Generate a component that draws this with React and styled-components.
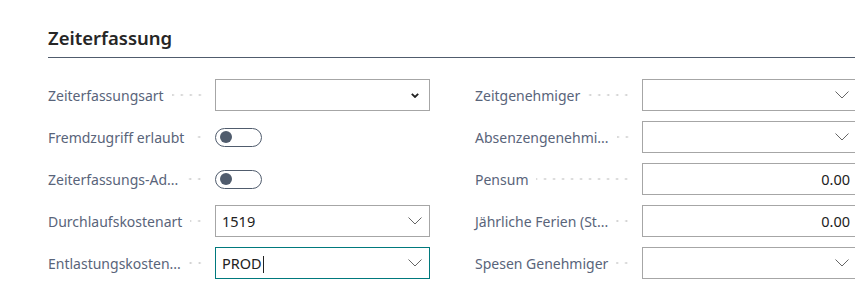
import React from "react";
import styled, { createGlobalStyle, css } from "styled-components";

const GlobalStyle = createGlobalStyle`
  body {
    margin: 0;
    background: #ffffff;
    overflow: hidden;
    font-family: "Noto Sans", "Open Sans", sans-serif;
  }
`;

const Page = styled.div`
  width: 855px;
  height: 297px;
  overflow: hidden;
  padding: 26px 0 0 48px;
  box-sizing: border-box;
`;

const Section = styled.section`
  width: 809px;
`;

const Title = styled.h2`
  margin: 0;
  font-size: 18.5px;
  font-weight: 600;
  line-height: 24px;
  color: #262626;
  padding-bottom: 7px;
  border-bottom: 1px solid #505c6d;
`;

const FieldGrid = styled.div`
  display: grid;
  grid-template-columns: 382px 382px;
  column-gap: 45px;
  margin-top: 16px;
`;

const Column = styled.div`
  display: flex;
  flex-direction: column;
`;

const Row = styled.div`
  display: grid;
  grid-template-columns: 167px 215px;
  height: 42px;
  align-items: center;
`;

const LabelCell = styled.div`
  display: flex;
  align-items: center;
  padding-right: 11px;
  min-width: 0;
`;

const LabelText = styled.span`
  font-size: 14px;
  color: #59647a;
  white-space: nowrap;
`;

const Leader = styled.span`
  flex: 1;
  height: 4px;
  margin-left: 8px;
  background-image: radial-gradient(circle, #cfcfcf 1px, transparent 1.2px);
  background-size: 9px 4px;
  background-repeat: repeat-x;
  background-position: right center;
`;

const Box = styled.div`
  position: relative;
  height: 32px;
  box-sizing: border-box;
  border: 1px solid #a6a6a6;
  display: flex;
  align-items: center;
  padding: 0 6px 0 6px;
  font-size: 14.5px;
  color: #212121;
  ${(p) =>
    p.$focused &&
    css`
      border: 1.5px solid #00797d;
    `}
  ${(p) =>
    p.$numeric &&
    css`
      justify-content: flex-end;
    `}
`;

const Value = styled.span`
  flex: 1;
  white-space: nowrap;
`;

const Caret = styled.span`
  display: inline-block;
  width: 1px;
  height: 17px;
  background: #212121;
  vertical-align: middle;
  margin-left: 1px;
`;

const Chevron = styled.svg`
  flex: none;
  margin-right: ${(p) => (p.$bold ? "4px" : "1px")};
`;

const Track = styled.div`
  width: 47px;
  height: 19px;
  box-sizing: border-box;
  border: 1px solid #505c6d;
  border-radius: 10px;
  display: flex;
  align-items: center;
  padding-left: 4px;
`;

const Knob = styled.span`
  width: 12px;
  height: 12px;
  border-radius: 50%;
  background: #505c6d;
`;

const ThinChevron = () => (
  <Chevron width="14" height="8" viewBox="0 0 14 8">
    <path d="M0.5 0.5 L7 7 L13.5 0.5" fill="none" stroke="#666" strokeWidth="1" />
  </Chevron>
);

const BoldChevron = () => (
  <Chevron $bold width="8" height="5" viewBox="0 0 8 5">
    <path d="M0.8 0.8 L4 4 L7.2 0.8" fill="none" stroke="#212121" strokeWidth="1.8" />
  </Chevron>
);

const Field = ({ label, type, value, focused }) => (
  <Row>
    <LabelCell>
      <LabelText>{label}</LabelText>
      <Leader />
    </LabelCell>
    {type === "toggle" ? (
      <Track>
        <Knob />
      </Track>
    ) : (
      <Box $focused={focused} $numeric={type === "number"}>
        {type === "number" ? (
          <span>{value}</span>
        ) : (
          <Value>
            {value}
            {focused && <Caret />}
          </Value>
        )}
        {type === "option" && <BoldChevron />}
        {type === "lookup" && <ThinChevron />}
      </Box>
    )}
  </Row>
);

const left = [
  { label: "Zeiterfassungsart", type: "option" },
  { label: "Fremdzugriff erlaubt", type: "toggle" },
  { label: "Zeiterfassungs-Ad...", type: "toggle" },
  { label: "Durchlaufskostenart", type: "lookup", value: "1519" },
  { label: "Entlastungskosten...", type: "lookup", value: "PROD", focused: true },
];

const right = [
  { label: "Zeitgenehmiger", type: "lookup" },
  { label: "Absenzengenehmi...", type: "lookup" },
  { label: "Pensum", type: "number", value: "0.00" },
  { label: "Jährliche Ferien (St...", type: "number", value: "0.00" },
  { label: "Spesen Genehmiger", type: "lookup" },
];

export default function App() {
  return (
    <>
      <GlobalStyle />
      <Page>
        <Section>
          <Title>Zeiterfassung</Title>
          <FieldGrid>
            <Column>
              {left.map((f) => (
                <Field key={f.label} {...f} />
              ))}
            </Column>
            <Column>
              {right.map((f) => (
                <Field key={f.label} {...f} />
              ))}
            </Column>
          </FieldGrid>
        </Section>
      </Page>
    </>
  );
}
